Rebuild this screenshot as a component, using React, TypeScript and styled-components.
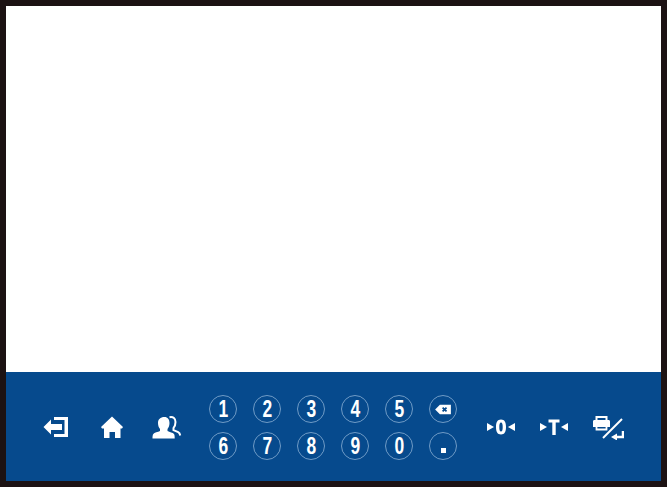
import React from "react";
import styled, { createGlobalStyle } from "styled-components";

const Global = createGlobalStyle`
  html, body { margin: 0; padding: 0; background: #1c1213; }
`;

const Frame = styled.div`
  box-sizing: border-box;
  width: 667px;
  height: 487px;
  padding: 6px;
  background: #1c1213;
  display: flex;
  flex-direction: column;
  overflow: hidden;
`;

const Screen = styled.div`
  flex: 1;
  background: #ffffff;
`;

const Footer = styled.div`
  height: 109px;
  background: #064a8d;
  display: flex;
  align-items: flex-start;
`;

const LeftIcons = styled.div`
  display: flex;
  margin: 41px 0 0 36px;
  gap: 26px;
`;

const IconSlot = styled.div<{ $w: number }>`
  width: ${(p) => p.$w}px;
  height: 28px;
  display: flex;
  align-items: center;
  justify-content: center;
`;

const Keypad = styled.div`
  display: grid;
  grid-template-columns: repeat(6, 28px);
  grid-auto-rows: 28px;
  column-gap: 16px;
  row-gap: 9px;
  margin: 23px 0 0 27px;
`;

const Key = styled.div`
  box-sizing: border-box;
  width: 28px;
  height: 28px;
  border-radius: 50%;
  border: 1px solid #6f9bc6;
  color: #fff;
  font-family: "Liberation Sans", Arial, sans-serif;
  font-weight: 700;
  font-size: 23px;
  line-height: 26px;
  display: flex;
  align-items: center;
  justify-content: center;
`;

const Digit = styled.span`
  display: inline-block;
  transform: scaleX(0.76);
`;

const RightIcons = styled.div`
  display: flex;
  margin: 41px 0 0 29px;
  gap: 23px;
  align-items: center;
`;

const Exit = () => (
  <svg width="26" height="22" viewBox="0 0 26 22" fill="#fff">
    <path d="M11 1h14v20H11v-3h10.500V4H11z" />
    <path d="M.5 11L8 3.500V8h11v6H8v4.500z" />
  </svg>
);

const Home = () => (
  <svg width="24" height="22" viewBox="-1 0 24 22" fill="#fff">
    <path d="M12 .5L23 11l-1 1.500h-1.500V22H15v-6H9.500v6H4v-9.500H2L1 11z" />
  </svg>
);

const Users = () => (
  <svg width="30" height="24" viewBox="0 0 30 24" fill="#fff">
    <path d="M12.500 2c3.200 0 5 2.500 5 6 0 2.500-.8 4.500-2 6v2c2 1.200 5.500 1.600 6.500 3 .6.900.7 2.500.7 4.500H.5c0-2 .1-3.500.8-4.500 1-1.400 4.700-2 6.700-3v-2c-1.200-1.500-2-3.500-2-6 0-3.500 2.300-6 6.500-6z" />
    <path d="M17.500 2.200c3.800-.8 6 1.400 6 4.800 0 2.500-.8 4.500-2 6v2.200l4.700 2c1.300.6 1.800 1.800 2 3.300" fill="none" stroke="#fff" strokeWidth="2" />
  </svg>
);

const Backspace = () => (
  <svg width="18" height="11" viewBox="0 0 22 14">
    <path d="M7 1h14v12H7L1 7z" fill="#fff" />
    <path d="M10.500 4.500l5 5M15.500 4.500l-5 5" stroke="#064a8d" strokeWidth="2.200" />
  </svg>
);

const Dot = styled.span`
  width: 5px;
  height: 5px;
  background: #fff;
  margin-top: 9px;
`;

const Zero = () => (
  <svg width="30" height="18" viewBox="0 0 30 18" fill="#fff">
    <path d="M1 5l7 4-7 4z" />
    <path d="M29 5l-7 4 7 4z" />
    <path fillRule="evenodd" d="M15 1.500c3.500 0 5 2.700 5 7.500s-1.500 7.500-5 7.500-5-2.700-5-7.500 1.500-7.500 5-7.500zm0 3c-1.200 0-1.700 1.500-1.700 4.500s.5 4.500 1.700 4.500 1.700-1.500 1.700-4.500-.5-4.500-1.700-4.500z" />
  </svg>
);

const Tare = () => (
  <svg width="30" height="18" viewBox="0 0 30 18" fill="#fff">
    <path d="M1 5l7 4-7 4z" />
    <path d="M29 5l-7 4 7 4z" />
    <path d="M9.500 1.500h11v3h-3.800V17h-3.400V4.500H9.500z" />
  </svg>
);

const PrintReturn = () => (
  <svg width="32" height="26" viewBox="0 0 32 26" fill="none">
    <path d="M4.500 6V3h10v3" stroke="#fff" strokeWidth="2" />
    <path d="M1 7.500C1 6.500 1.600 6 2.500 6h14c.9 0 1.500.5 1.500 1.500V13h-3v-2H4v2H1z" fill="#fff" />
    <path d="M4.500 12h10v3.500h-10z" stroke="#fff" strokeWidth="1.800" />
    <path d="M11 24L30 5" stroke="#fff" strokeWidth="2" />
    <path d="M31 17v6h-7" stroke="#fff" strokeWidth="2.500" />
    <path d="M19 23l6-3.500v7z" fill="#fff" />
  </svg>
);

const digitsTop = ["1", "2", "3", "4", "5"];
const digitsBottom = ["6", "7", "8", "9", "0"];

export default function App() {
  return (
    <>
      <Global />
      <Frame>
        <Screen />
        <Footer>
          <LeftIcons>
            <IconSlot $w={28}><Exit /></IconSlot>
            <IconSlot $w={30}><Home /></IconSlot>
            <IconSlot $w={30}><Users /></IconSlot>
          </LeftIcons>
          <Keypad>
            {digitsTop.map((d) => (
              <Key key={d}><Digit>{d}</Digit></Key>
            ))}
            <Key><Backspace /></Key>
            {digitsBottom.map((d) => (
              <Key key={d}><Digit>{d}</Digit></Key>
            ))}
            <Key><Dot /></Key>
          </Keypad>
          <RightIcons>
            <IconSlot $w={30}><Zero /></IconSlot>
            <IconSlot $w={30}><Tare /></IconSlot>
            <IconSlot $w={32}><PrintReturn /></IconSlot>
          </RightIcons>
        </Footer>
      </Frame>
    </>
  );
}
